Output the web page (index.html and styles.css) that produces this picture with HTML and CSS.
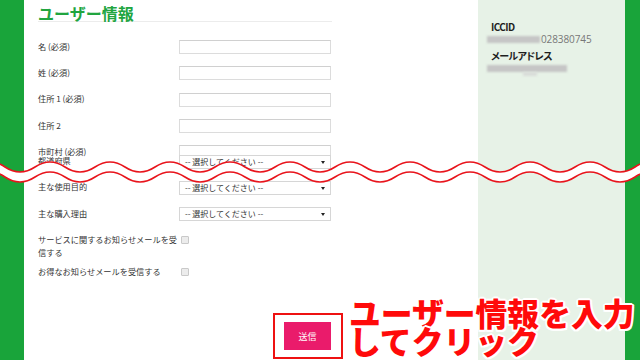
FILE: index.html
```html
<!DOCTYPE html>
<html lang="ja">
<head>
<meta charset="utf-8">
<title>ユーザー情報</title>
<link rel="stylesheet" href="styles.css">
</head>
<body>
<div class="page">
  <div class="bar"></div>
  <main class="content">
    <h1 class="title">ユーザー情報</h1>
    <div class="form">
      <div class="row"><span class="label">名 (必須)</span><span class="input"></span></div>
      <div class="row"><span class="label">姓 (必須)</span><span class="input"></span></div>
      <div class="row"><span class="label">住所 1 (必須)</span><span class="input"></span></div>
      <div class="row"><span class="label">住所 2</span><span class="input"></span></div>
      <div class="row"><span class="label">市町村 (必須)</span><span class="input"></span></div>
      <div class="row spliced"><span class="label">都道府県</span><span class="select">-- 選択してください --</span></div>
      <div class="row"><span class="label">主な使用目的</span><span class="select">-- 選択してください --</span></div>
      <div class="row"><span class="label">主な購入理由</span><span class="select">-- 選択してください --</span></div>
      <div class="check-row"><span class="label">サービスに関するお知らせメールを受信する</span><span class="checkbox"></span></div>
      <div class="check-row"><span class="label">お得なお知らせメールを受信する</span><span class="checkbox"></span></div>
    </div>
    <div class="actions"><button class="submit">送信</button></div>
  </main>
  <aside class="side">
    <div class="side-title">ICCID</div>
    <div class="side-value"><span class="blur blur-short"></span><span class="digits">028380745</span></div>
    <div class="side-title side-gap">メールアドレス</div>
    <div class="blur blur-long"></div>
    <div class="blur blur-tail"></div>
  </aside>
  <div class="bar bar-right"></div>

  <svg class="wave" width="640" height="35" viewBox="0 0 640 35" aria-hidden="true">
    <path class="wave-fill" d="M -25 12 Q -10 2 5 12 T 35 12 T 65 12 T 95 12 T 125 12 T 155 12 T 185 12 T 215 12 T 245 12 T 275 12 T 305 12 T 335 12 T 365 12 T 395 12 T 425 12 T 455 12 T 485 12 T 515 12 T 545 12 T 575 12 T 605 12 T 635 12 T 665 12 L 665 22 Q 650 12 635 22 T 605 22 T 575 22 T 545 22 T 515 22 T 485 22 T 455 22 T 425 22 T 395 22 T 365 22 T 335 22 T 305 22 T 275 22 T 245 22 T 215 22 T 185 22 T 155 22 T 125 22 T 95 22 T 65 22 T 35 22 T 5 22 T -25 22 Z"/>
    <path class="wave-line" d="M -25 12 Q -10 2 5 12 T 35 12 T 65 12 T 95 12 T 125 12 T 155 12 T 185 12 T 215 12 T 245 12 T 275 12 T 305 12 T 335 12 T 365 12 T 395 12 T 425 12 T 455 12 T 485 12 T 515 12 T 545 12 T 575 12 T 605 12 T 635 12 T 665 12"/>
    <path class="wave-line" d="M -25 22 Q -10 12 5 22 T 35 22 T 65 22 T 95 22 T 125 22 T 155 22 T 185 22 T 215 22 T 245 22 T 275 22 T 305 22 T 335 22 T 365 22 T 395 22 T 425 22 T 455 22 T 485 22 T 515 22 T 545 22 T 575 22 T 605 22 T 635 22 T 665 22"/>
  </svg>

  <div class="callout-box"></div>
  <p class="callout-text">ユーザー情報を入力<br>してクリック</p>
</div>
</body>
</html>
```
FILE: styles.css
```css
* { box-sizing: border-box; }
html, body { margin: 0; padding: 0; }
body {
  width: 640px;
  height: 360px;
  overflow: hidden;
  background: #fff;
  font-family: "Noto Sans CJK JP", "Noto Sans", sans-serif;
}
.page {
  position: relative;
  display: flex;
  width: 640px;
  height: 360px;
  overflow: hidden;
}
.bar {
  width: 24px;
  flex: none;
  background: #19a43a;
}
.bar-right { width: 15px; }
.content {
  width: 454px;
  flex: none;
  padding-left: 14px;
  background: #fff;
}
.title {
  margin: 0;
  width: 294px;
  padding-top: 5px;
  font-size: 16px;
  line-height: 16px;
  font-weight: 700;
  color: #21a53f;
  border-bottom: 1px solid #ececec;
}
.form {
  padding-top: 12px;
  font-size: 8.2px;
  color: #333;
}
.row {
  display: flex;
  align-items: center;
  height: 26.3px;
}
.row.spliced { margin-top: -17px; }
.label {
  width: 141px;
  flex: none;
  line-height: 13px;
  margin-top: -2px;
}
.input {
  width: 152px;
  height: 14px;
  border: 1px solid #dcdcdc;
  border-top-color: #d0d0d0;
  background: #fff;
}
.select {
  position: relative;
  width: 152px;
  height: 14px;
  border: 1px solid #d6d6d6;
  background: #fff;
  font-size: 8px;
  line-height: 12px;
  padding-left: 5px;
  color: #333;
}
.select::after {
  content: "";
  position: absolute;
  right: 5px;
  top: 5px;
  border-left: 2px solid transparent;
  border-right: 2px solid transparent;
  border-top: 3px solid #222;
}
.check-row {
  display: flex;
  align-items: flex-start;
  margin-top: 6px;
}
.check-row .label { margin-top: 0; }
.checkbox {
  width: 8px;
  height: 8px;
  margin: 3px 0 0 2px;
  border: 1px solid #c9c9c9;
  border-radius: 1px;
  background: #ececec;
}
.actions {
  margin-top: 44px;
  padding-left: 246px;
}
.submit {
  display: block;
  width: 47px;
  height: 28px;
  border: 0;
  padding: 0;
  background: #ea1b6b;
  color: #fff;
  font-family: "Noto Sans CJK JP", sans-serif;
  font-size: 9px;
}
.side {
  width: 147px;
  flex: none;
  background: #e7f2e7;
  padding: 21px 0 0 13px;
}
.side-title {
  font-size: 10px;
  line-height: 12px;
  font-weight: 700;
  color: #1e1e1e;
  font-feature-settings: "palt";
  letter-spacing: -0.6px;
}
.side-gap { margin-top: 5px; }
.side-value {
  display: flex;
  align-items: center;
  height: 12px;
  margin-left: -4px;
}
.digits {
  font-family: "Open Sans", "Noto Sans", sans-serif;
  font-size: 10px;
  color: #777;
  letter-spacing: -0.1px;
}
.blur {
  display: block;
  background: #c6c6c6;
  filter: blur(1px);
}
.blur-short { width: 53px; height: 7px; margin-right: 1px; }
.blur-long { width: 80px; height: 7px; margin: 3px 0 0 -4px; }
.blur-tail { width: 14px; height: 4px; margin-left: 32px; background: #d9dcd9; }
.wave {
  position: absolute;
  left: 0;
  top: 155px;
}
.wave-fill { fill: #fff; }
.wave-line {
  fill: none;
  stroke: #e8141c;
  stroke-width: 1.6;
}
.callout-box {
  position: absolute;
  left: 273px;
  top: 313px;
  width: 70px;
  height: 46px;
  border: 2px solid #ee1111;
}
.callout-text {
  position: absolute;
  left: 349px;
  top: 298px;
  margin: 0;
  font-family: "Noto Sans CJK JP", sans-serif;
  font-size: 31.8px;
  line-height: 28px;
  font-weight: 900;
  color: #ff0a0a;
  white-space: nowrap;
  text-shadow:
    2px 0 0 #fff, -2px 0 0 #fff, 0 2px 0 #fff, 0 -2px 0 #fff,
    1.5px 1.5px 0 #fff, -1.5px 1.5px 0 #fff, 1.5px -1.5px 0 #fff, -1.5px -1.5px 0 #fff;
}
```
